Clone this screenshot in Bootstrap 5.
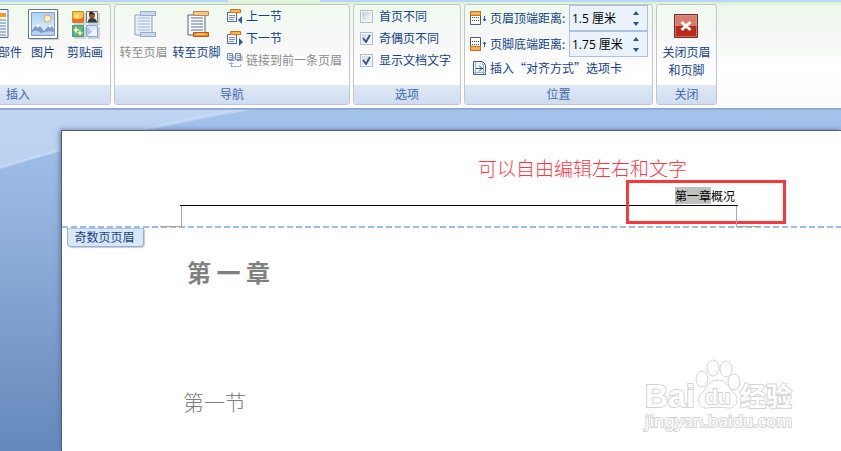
<!DOCTYPE html>
<html lang="zh-CN">
<head>
<meta charset="utf-8">
<meta name="viewport" content="width=device-width, initial-scale=1">
<title>页眉和页脚</title>
<link rel="stylesheet" href="https://cdn.jsdelivr.net/npm/bootstrap@5.3.0/dist/css/bootstrap.min.css">
<style>
body{font-family:"Noto Sans CJK SC",sans-serif;font-size:12px;line-height:18px;color:#15428b;background:#6488bb}
.ribbon-strip{height:2px;flex:none;background:linear-gradient(90deg,#b9d6fb 228px,#dff3da 228px,#dff3da 320px,#b9d6fb 320px)}
.ribbon{z-index:1;gap:3px;padding:2px 0;background:linear-gradient(#d9f0d4 0,#edf9ea 5px,#f3f6f3 30px,#fff 70px,#fbfbfb);border-bottom:1px solid #fff;box-shadow:0 1px 0 #8ba4c9,0 2px 0 #93b0da}
.ribbon-group{height:101px;border:1px solid #c3c6c8;border-radius:3px;background:linear-gradient(#effbed 0,#f6f7f6 32px,#fff 75px);overflow:hidden}
.group-body{height:80px}
.group-title{height:19px;line-height:18px;background:linear-gradient(#dfe8f6,#cfdcf1);color:#3e6aaa;text-align:center;font-size:12px;margin:0;font-weight:400}
.tool{background:none;border:0;padding:0;color:inherit;white-space:nowrap}
.tool:disabled{color:#8d8d8d}
.tool-lg{display:flex;flex-direction:column;align-items:center;padding-top:3px}
.tool-lg svg{width:32px;height:32px;margin-bottom:3px}
.w-tool{width:42px}.w-goto{width:53px}
.tool-sm{display:flex;align-items:center;gap:3px;height:22px}
.g-insert{width:186px;margin-left:-75px}
.g-nav{width:236px}.g-option{width:108px}.g-position{width:189px}.g-close{width:61px}
.nav-body{padding-left:2px}
.opt-body{padding-left:6px}
.opt{height:22px;gap:6px}
.opt input{appearance:none;width:13px;height:13px;margin:0;border:1px solid #a9bfdd;background:linear-gradient(135deg,#c3c7cb,#fff);box-shadow:inset 0 0 0 1px #f4f6f8}
.opt input:checked{background:url("data:image/svg+xml,%3Csvg xmlns='http://www.w3.org/2000/svg' viewBox='0 0 11 11'%3E%3Cpath d='M2 5l3 4 4-7' fill='none' stroke='%233d5a86' stroke-width='2'/%3E%3C/svg%3E"),linear-gradient(135deg,#d0d5db,#fff)}
.spin-row{height:26px;gap:3px}
.spin{width:79px;height:26px;border:1px solid #abc1de;background:#eaf2fb}
.spin input{width:56px;border:0;padding:0 0 0 2px;background:none;color:#000;font-family:"Open Sans","Noto Sans CJK SC",sans-serif;font-size:12px;height:22px}
.spin button{border:0;background:none;padding:0;width:20px;height:11px;display:flex;align-items:center;justify-content:center}
.desk{background:linear-gradient(#a4c3eb,#93b2de 110px,#6488bb 345px);padding:22px 0 0 61px;overflow:hidden}
.desk-curve{position:absolute;left:0;top:0;width:300px;height:80px}
.sheet{background:#fff;border:solid #555d68;border-width:1px 0 0 1px;box-shadow:-1px 0 5px #5878a8;overflow:hidden}
.print-area{max-width:558px;margin-left:118px}
.note{color:#fb3a45;font-size:19px;font-weight:300;line-height:26px;padding:24px 51px 0 0;text-align:right}
.running-head{color:#000;font-size:12px;line-height:18px;height:25px;padding:6px 3px 0 0;border-bottom:1px solid #000;text-align:right}
.picked{background:#bfbfbf}
.frame{position:absolute;right:-48px;top:-1px;width:160px;height:44px;border:3px solid #fa383c}
.margins{position:relative;height:20px;margin:0 1px;border:solid #a8a8a8;border-width:0 1px}
.margins::before,.margins::after{content:"";position:absolute;bottom:-1px;width:22px;height:1px;background:#a8a8a8}
.margins::before{right:100%}
.margins::after{left:100%}
.divider{height:2px;background:repeating-linear-gradient(90deg,#9cbbe2 0,#9cbbe2 6px,#fff 6px,#fff 9px)}
.head-tab{margin-left:5px;width:77px;height:19px;line-height:16px;padding-right:2px;text-align:center;background:#d9e8f6;border:1px solid #8fb0da;border-top-color:#a9c4e6;border-radius:0 0 4px 4px;box-shadow:1px 1px 1px #c8ccd2}
.body-text{padding-left:121px;color:#808080}
.chapter{font-size:24px;line-height:36px;font-weight:700;margin:7px 0 0;padding-left:4px}
.section{font-size:21px;line-height:32px;font-weight:300;margin:95px 0 0}
.watermark{position:absolute;right:44px;bottom:14px;width:156px;height:80px}
.watermark text{paint-order:stroke;stroke-width:2px}
</style>
<script src="https://cdn.jsdelivr.net/npm/bootstrap@5.3.0/dist/js/bootstrap.bundle.min.js"></script>
</head>
<body class="d-flex flex-column vh-100 overflow-hidden">
<div class="ribbon-strip"></div>
<header class="ribbon d-flex position-relative">
  <section class="ribbon-group g-insert flex-shrink-0">
    <div class="group-body d-flex justify-content-end pe-1">
      <button class="tool tool-lg" type="button">
        <svg viewBox="0 0 32 32"><path d="M1 1.500h25v28H1z" fill="#f5f9fe" stroke="#506b96"/><path d="M17 5h7v4h-7z" fill="#f79a29"/><path d="M4 5h10v4H4z" fill="#6586be"/><path d="M4 12h20M4 15h20M4 18h20M4 21h20M4 24h20M4 27h20" stroke="#597bb0"/></svg>文档部件</button>
      <button class="tool tool-lg w-tool" type="button">
        <svg viewBox="0 0 32 32"><defs><linearGradient id="sky" x2="0" y2="1"><stop stop-color="#a5d1f8"/><stop offset="1" stop-color="#eef8ff"/></linearGradient></defs><path d="M3 3h29v29H3z" fill="#ccd0d3"/><path d="M1.500 1.500h29v29h-29z" fill="#fff" stroke="#64768b"/><path d="M4.500 4.500h23v23h-23z" fill="url(#sky)" stroke="#7f9dc8"/><circle cx="20.500" cy="10.500" r="3.500" fill="#fff4c8" stroke="#f39a59"/><path d="M5 22l6-7 6 8 6-7 4 5v4H5z" fill="#7e9dce"/><path d="M11 15l3 4-2-1-1 2-2-2-2 2zM23 16l3 3-2-1-1 2-2-2z" fill="#fff"/><path d="M5 24q5-3 9 1 7-3 13-1v3H5z" fill="#bad1ec"/></svg>图片</button>
      <button class="tool tool-lg w-tool" type="button">
        <svg viewBox="0 0 32 32"><path d="M5 5h12v12H5zM19 5h12v12H19zM5 19h12v12H5zM19 19h12v12H19z" fill="#d1d3d4"/><path d="M3.500 3.500h11v11h-11z" fill="#ffc637" stroke="#bd8d3d"/><path d="M4 10q6 3 10-1v5H4z" fill="#ee6d24"/><circle cx="8" cy="8" r="2" fill="#fff29f"/><path d="M17.500 3.500h11v11h-11z" fill="#eee" stroke="#777"/><circle cx="23" cy="7.500" r="3" fill="#9b5632"/><path d="M19 14q0-4 4-4t5 4z" fill="#363c45"/><path d="M20 7q0-4 3-3t3 3q-2-2-6 0z" fill="#222"/><path d="M3.500 17.500h11v11h-11z" fill="#58b783" stroke="#4b9b76"/><path d="M7 18l1 3 3 1-3 1-1 3-1-3-2-1 2-1zM11 22l1 2 2 1-2 1-1 2-1-2-2-1 2-1z" fill="#fff5b4"/><path d="M17.500 17.500h11v11h-11z" fill="#d7e6fb" stroke="#88a5d5"/><path d="M18 18l6 7 4-5v8H18z" fill="#aac6f2"/><path d="M18 28l10-8v8z" fill="#edf5ff"/></svg>剪贴画</button>
    </div>
    <h2 class="group-title">插入</h2>
  </section>
  <section class="ribbon-group g-nav flex-shrink-0">
    <div class="group-body nav-body d-flex">
      <button class="tool tool-lg w-goto" type="button" disabled>
        <svg viewBox="0 0 32 32"><path d="M7 7h17v20H7z" fill="#e5edf8" stroke="#8da3c5"/><path d="M10 10h12M10 13h12M10 16h12M10 19h12M10 22h12" stroke="#a6b9d5"/><path d="M12.500 3.500h15v4h-15zM12.500 24.500h15v4h-15z" fill="#cdd9ec" stroke="#94a9cb"/></svg>转至页眉</button>
      <button class="tool tool-lg w-goto" type="button">
        <svg viewBox="0 0 32 32"><path d="M7 7h17v20H7z" fill="#f7faff" stroke="#536583"/><path d="M10 10h12M10 13h12M10 16h12M10 19h12M10 22h12" stroke="#657492"/><path d="M12.500 3.500h15v4h-15z" fill="#f8c88b" stroke="#c48743"/><path d="M12.500 24.500h15v4h-15z" fill="#f58d22" stroke="#b85808"/><path d="M15 26h9" stroke="#ffe1a2"/></svg>转至页脚</button>
      <div class="d-flex flex-column ps-1">
        <button class="tool tool-sm" type="button"><svg width="16" height="16" viewBox="0 0 16 16"><path d="M.5 4.500h9v9h-9z" fill="#f0f5fc" stroke="#53698f"/><path d="M2 7.500h6M2 9.500h6M2 11.500h5" stroke="#7e92b3"/><path d="M3.500 1.500h10v3h-10z" fill="#fbb755" stroke="#c36e18"/><path d="M3 4.500h11" stroke="#e07a10"/><path d="M15 8v8l-4-4z" fill="#245ba9"/></svg>上一节</button>
        <button class="tool tool-sm" type="button"><svg width="16" height="16" viewBox="0 0 16 16"><path d="M.5 4.500h9v9h-9z" fill="#f0f5fc" stroke="#53698f"/><path d="M2 7.500h6M2 9.500h6M2 11.500h5" stroke="#7e92b3"/><path d="M3.500 1.500h10v3h-10z" fill="#fbb755" stroke="#c36e18"/><path d="M3 4.500h11" stroke="#e07a10"/><path d="M12 8v8l4-4z" fill="#245ba9"/></svg>下一节</button>
        <button class="tool tool-sm" type="button" disabled><svg width="16" height="16" viewBox="0 0 16 16"><path d="M.5 1.500h5v6h-5zM8.500 1.500h5v6h-5z" fill="#e4ecf7" stroke="#7088b0"/><path d="M2 3.500h3M2 5.500h3M10 3.500h3M10 5.500h3M2 8.500h5v-5M10 8.500h5v-5" fill="none" stroke="#8197bb"/><path d="M4.500 14.500v-4M2.500 11.500h4M4.500 14.500h9v-3" fill="none" stroke="#7990b8" stroke-dasharray="2 1"/></svg>链接到前一条页眉</button>
      </div>
    </div>
    <h2 class="group-title">导航</h2>
  </section>
  <section class="ribbon-group g-option flex-shrink-0">
    <div class="group-body opt-body d-flex flex-column">
      <div class="opt d-flex align-items-center"><input type="checkbox" id="first"><label for="first">首页不同</label></div>
      <div class="opt d-flex align-items-center"><input type="checkbox" id="odd" checked><label for="odd">奇偶页不同</label></div>
      <div class="opt d-flex align-items-center"><input type="checkbox" id="show" checked><label for="show">显示文档文字</label></div>
    </div>
    <h2 class="group-title">选项</h2>
  </section>
  <section class="ribbon-group g-position flex-shrink-0">
    <div class="group-body ps-1">
      <div class="spin-row d-flex align-items-center"><svg width="18" height="16" viewBox="0 0 18 16"><path d="M1.500 1.500h10v13h-10z" fill="#fff" stroke="#515e73"/><path d="M1.500 1.500h10v4h-10z" fill="#fbb14a" stroke="#bd7224"/><path d="M1 7.500h12M1 10.500h12" stroke="#3c4656" stroke-dasharray="1 1"/><path d="M15.500 6v5M14 9l1.500 2L17 9" fill="none" stroke="#245ba9"/></svg><label for="top">页眉顶端距离:</label>
        <div class="spin d-flex align-items-center ms-auto me-1"><input id="top" type="text" value="1.5 厘米"><div><button type="button" aria-label="增大页眉距离"><svg width="6" height="4"><path d="M0 4l3-4 3 4z" fill="#24549b"/></svg></button><button type="button" aria-label="减小页眉距离"><svg width="6" height="4"><path d="M0 0l3 4 3-4z" fill="#24549b"/></svg></button></div></div></div>
      <div class="spin-row d-flex align-items-center"><svg width="18" height="16" viewBox="0 0 18 16"><path d="M1.500 1.500h10v13h-10z" fill="#fff" stroke="#515e73"/><path d="M1.500 10.500h10v4h-10z" fill="#fbb14a" stroke="#bd7224"/><path d="M1 5.500h12M1 8.500h12" stroke="#3c4656" stroke-dasharray="1 1"/><path d="M15.500 11V6M14 8l1.500-2L17 8" fill="none" stroke="#245ba9"/></svg><label for="bottom">页脚底端距离:</label>
        <div class="spin d-flex align-items-center ms-auto me-1"><input id="bottom" type="text" value="1.75 厘米"><div><button type="button" aria-label="增大页脚距离"><svg width="6" height="4"><path d="M0 4l3-4 3 4z" fill="#24549b"/></svg></button><button type="button" aria-label="减小页脚距离"><svg width="6" height="4"><path d="M0 0l3 4 3-4z" fill="#24549b"/></svg></button></div></div></div>
      <button class="tool tool-sm ps-1" type="button"><svg width="14" height="16" viewBox="0 0 14 16"><path d="M.5 1.500h9l3 3v10H.5z" fill="#f3f8ff" stroke="#3f5f94"/><path d="M9.500 1.500v3h3M2.500 2v12M10.500 5v9M1 12.500h12" fill="none" stroke="#9baece"/><path d="M3 8.500h7M6 5.500l3 3-3 3" fill="none" stroke="#24549b"/></svg>插入“对齐方式”选项卡</button>
    </div>
    <h2 class="group-title">位置</h2>
  </section>
  <section class="ribbon-group g-close flex-shrink-0">
    <div class="group-body d-flex justify-content-center">
      <button class="tool tool-lg" type="button"><svg viewBox="0 0 32 32"><path d="M4.500 6.500h23v23h-23z" fill="#d77c6f" stroke="#6b2d2a"/><path d="M5 18h22v11H5z" fill="#bd2b18"/><path d="M5.500 7.500h21v21h-21z" fill="none" stroke="#e0a093" stroke-opacity=".6"/><path d="M11.500 14l9 8M20.500 14l-9 8" stroke="#fff" stroke-width="3"/></svg>关闭页眉<br>和页脚</button>
    </div>
    <h2 class="group-title">关闭</h2>
  </section>
</header>
<main class="desk flex-grow-1 d-flex position-relative">
  <svg class="desk-curve" viewBox="0 0 300 80" aria-hidden="true"><path d="M0 0h262Q120 24 0 61z" fill="#c9dcf5" fill-opacity=".7"/><path d="M0 59Q120 22 245 0" fill="none" stroke="#d8e6f8" stroke-opacity=".6"/></svg>
  <article class="sheet flex-grow-1 position-relative">
    <div class="print-area">
      <p class="note mb-0">可以自由编辑左右和文字</p>
      <div class="running-head position-relative"><span class="picked">第一章</span>概况<div class="frame"></div></div>
      <div class="margins"></div>
    </div>
    <div class="divider"></div>
    <div class="head-tab">奇数页页眉</div>
    <div class="body-text">
      <h1 class="chapter">第 一 章</h1>
      <h2 class="section">第一节</h2>
    </div>
    <svg class="watermark" viewBox="0 0 156 80" fill="#fff" stroke="#d4d4d4" stroke-width="1">
      <text x="4" y="50" font-family="Liberation Sans, sans-serif" font-size="32" font-weight="700">Bai</text>
      <ellipse cx="61" cy="22" rx="6" ry="8"/><ellipse cx="72" cy="11" rx="6" ry="8"/><ellipse cx="85" cy="12" rx="6" ry="8"/><ellipse cx="93" cy="25" rx="6" ry="8"/>
      <path d="M77 23c-10 0-10 8-16 13-7 7-2 16 6 15 7-1 13-1 20 0 9 1 12-9 6-15-6-6-7-13-16-13z"/>
      <text x="64" y="47" font-family="Liberation Sans, sans-serif" font-size="21" font-weight="700">du</text>
      <text x="99" y="49" font-family="Noto Sans CJK SC, sans-serif" font-size="26" font-weight="700">经验</text>
      <text x="4" y="70" font-family="Noto Sans, sans-serif" font-size="17">jingyan.baidu.com</text>
    </svg>
  </article>
</main>
</body>
</html>
